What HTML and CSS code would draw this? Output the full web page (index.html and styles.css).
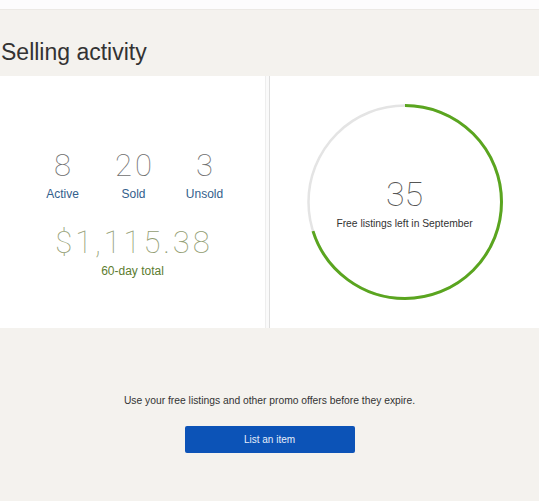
FILE: index.html
```html
<!DOCTYPE html>
<html>
<head>
<meta charset="utf-8">
<link rel="stylesheet" href="styles.css">
</head>
<body>
<div class="topbar"></div>
<h1 class="title">Selling activity</h1>
<div class="cards">
  <section class="card card-left">
    <div class="stats">
      <div class="stat"><div class="num">8</div><div class="lbl">Active</div></div>
      <div class="stat"><div class="num">20</div><div class="lbl">Sold</div></div>
      <div class="stat"><div class="num">3</div><div class="lbl">Unsold</div></div>
    </div>
    <div class="money">$1,115.38</div>
    <div class="money-lbl">60-day total</div>
  </section>
  <section class="card card-right">
    <div class="ring">
      <svg class="ring-svg" width="196" height="196" viewBox="0 0 196 196">
        <circle cx="98" cy="98" r="96.5" fill="none" stroke="#e4e4e4" stroke-width="2.5"/>
        <circle cx="98" cy="98" r="96.5" fill="none" stroke="#5aa51f" stroke-width="3" stroke-dasharray="424.4 700" transform="rotate(-90 98 98)"/>
      </svg>
      <div class="ring-text">
        <div class="ring-num">35</div>
        <div class="ring-lbl">Free listings left in September</div>
      </div>
    </div>
  </section>
</div>
<div class="promo">
  <p class="promo-text">Use your free listings and other promo offers before they expire.</p>
  <button class="btn">List an item</button>
</div>
</body>
</html>
```
FILE: styles.css
```css
html, body {
  margin: 0;
  padding: 0;
}
body {
  background: #f4f2ee;
  font-family: "Liberation Sans", Arial, sans-serif;
  color: #333;
  width: 539px;
  height: 501px;
  overflow: hidden;
}
.topbar {
  height: 9px;
  background: #fdfcfd;
  border-bottom: 1px solid #ece9e5;
}
.title {
  margin: 29px 0 0 1px;
  font-size: 23px;
  line-height: 26px;
  font-weight: normal;
  color: #333;
}
.cards {
  margin-top: 11px;
  display: flex;
  height: 252px;
  gap: 3px;
  background: #fafafa;
}
.card {
  background: #fff;
}
.card-left {
  width: 266px;
  border-right: 1px solid #eeeeee;
  display: flex;
  flex-direction: column;
  align-items: center;
  padding-top: 72px;
  box-sizing: border-box;
}
.card-right {
  flex: 1;
  border-left: 1px solid #dedede;
  display: flex;
  align-items: center;
  justify-content: center;
}
.stats {
  display: flex;
  margin-left: 2px;
}
.stat {
  width: 71px;
  text-align: center;
}
.num {
  font-family: Roboto, "Liberation Sans", sans-serif;
  font-weight: 100;
  font-size: 31px;
  line-height: 36px;
  letter-spacing: 3px;
  text-indent: 3px;
  color: #707070;
}
.lbl {
  margin-top: 3px;
  font-size: 12px;
  line-height: 14px;
  color: #33608c;
}
.money {
  margin-top: 24px;
  font-family: Roboto, "Liberation Sans", sans-serif;
  font-weight: 100;
  font-size: 31px;
  line-height: 36px;
  letter-spacing: 2.9px;
  text-indent: 2.9px;
  color: #929d72;
}
.money-lbl {
  margin-top: 3px;
  font-size: 12px;
  line-height: 14px;
  color: #5c7c30;
}
.ring {
  display: grid;
  width: 196px;
  height: 196px;
}
.ring-svg, .ring-text {
  grid-area: 1 / 1;
}
.ring-text {
  display: flex;
  flex-direction: column;
  align-items: center;
  justify-content: center;
}
.ring-num {
  font-family: Roboto, "Liberation Sans", sans-serif;
  font-weight: 100;
  font-size: 34px;
  line-height: 40px;
  color: #555;
}
.ring-lbl {
  margin-top: 4px;
  font-size: 10.3px;
  line-height: 12px;
  color: #333;
}
.promo {
  display: flex;
  flex-direction: column;
  align-items: center;
}
.promo-text {
  margin: 67px 0 0;
  font-size: 10.3px;
  line-height: 12px;
  color: #333;
}
.btn {
  margin-top: 19px;
  width: 170px;
  height: 27px;
  border: none;
  border-radius: 2px;
  background: #0c53b7;
  color: #e6eefa;
  font-family: "Liberation Sans", Arial, sans-serif;
  font-size: 10px;
  padding: 0;
}
```
